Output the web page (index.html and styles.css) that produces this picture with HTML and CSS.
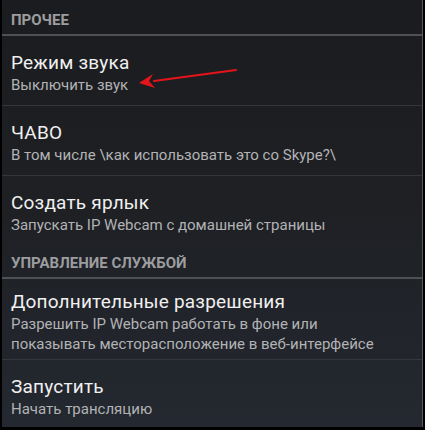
FILE: index.html
```html
<!DOCTYPE html>
<html lang="ru">
  <head>
    <meta charset="UTF-8" />
    <meta name="viewport" content="width=device-width, initial-scale=1.0" />
    <title>Настройки</title>
    <link rel="stylesheet" href="styles.css">
  </head>
  <body>
    <div class="screen">
      <div class="category">Прочее</div>

      <div class="pref">
        <div class="pref-title">Режим звука</div>
        <div class="pref-summary">Выключить звук</div>
      </div>

      <div class="pref">
        <div class="pref-title">ЧАВО</div>
        <div class="pref-summary">В том числе \как использовать это со Skype?\</div>
      </div>

      <div class="pref last">
        <div class="pref-title">Создать ярлык</div>
        <div class="pref-summary">Запускать IP Webcam с домашней страницы</div>
      </div>

      <div class="category">Управление службой</div>

      <div class="pref tall">
        <div class="pref-title">Дополнительные разрешения</div>
        <div class="pref-summary">Разрешить IP Webcam работать в фоне или показывать месторасположение в веб-интерфейсе</div>
      </div>

      <div class="pref last">
        <div class="pref-title">Запустить</div>
        <div class="pref-summary">Начать трансляцию</div>
      </div>

      <!-- red annotation arrow -->
      <svg class="arrow" width="110" height="30" viewBox="0 0 110 30">
        <line x1="102" y1="6" x2="20" y2="17" stroke="#e5141b" stroke-width="2.2" stroke-linecap="round" />
        <polygon points="5,19 19,10 15,17 21,24" fill="#e5141b" />
      </svg>
    </div>
  </body>
</html>
```

FILE: styles.css
```css
body {
  margin: 0;
  background: #000;
  font-family: Roboto, "Noto Sans", sans-serif;
}

.screen {
  position: relative;
  width: 420px;
  height: 427px;
  margin-left: 2px;
  border-right: 1px solid #55575b;
  background: linear-gradient(#1b1c1f, #1e2024 50%, #242830);
  overflow: hidden;
}

/* category headers */
.category {
  padding: 10px 9px 4px;
  font-size: 15px;
  line-height: 20px;
  font-weight: bold;
  text-transform: uppercase;
  color: #9c9d9f;
  border-bottom: 2px solid #4e5054;
}

/* preference rows */
.pref {
  padding: 15px 30px 10px 9px;
  border-bottom: 1px solid #34363a;
}
.pref.tall {
  padding-top: 11px;
  padding-bottom: 5px;
}
.pref.last {
  padding-bottom: 8px;
  border-bottom: none;
}
.pref-title {
  font-size: 19px;
  line-height: 24px;
  letter-spacing: 0.2px;
  color: #f0f0f0;
}
.pref-summary {
  font-size: 15px;
  line-height: 20px;
  color: #b2b3b5;
}

.arrow {
  position: absolute;
  left: 132px;
  top: 64px;
}
```
